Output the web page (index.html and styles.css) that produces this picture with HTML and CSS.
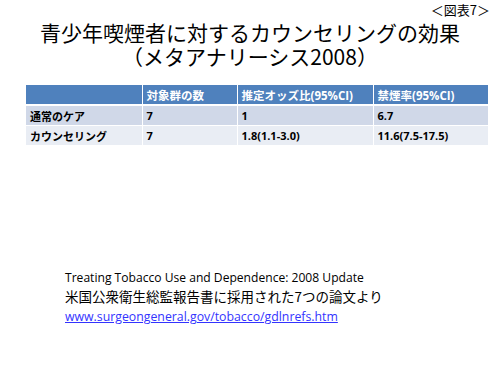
FILE: index.html
```html
<!DOCTYPE html>
<html lang="ja">
<head>
<meta charset="utf-8">
<link rel="stylesheet" href="styles.css">
</head>
<body>
<div class="slide">
  <div class="label">＜図表7＞</div>
  <h1 class="title"><span class="t1">青少年喫煙者に対するカウンセリングの効果</span><span class="t2">（メタアナリーシス2008）</span></h1>
  <table class="data">
    <colgroup>
      <col class="c1"><col class="c2"><col class="c3"><col class="c4">
    </colgroup>
    <thead>
      <tr><th></th><th>対象群の数</th><th>推定オッズ比(95%CI)</th><th>禁煙率(95%CI)</th></tr>
    </thead>
    <tbody>
      <tr class="odd"><td>通常のケア</td><td>7</td><td>1</td><td>6.7</td></tr>
      <tr class="even"><td>カウンセリング</td><td>7</td><td>1.8(1.1-3.0)</td><td>11.6(7.5-17.5)</td></tr>
    </tbody>
  </table>
  <div class="source">
    <div class="src-en">Treating Tobacco Use and Dependence: 2008 Update</div>
    <div class="src-ja">米国公衆衛生総監報告書に採用された7つの論文より</div>
    <a class="src-link" href="#">www.surgeongeneral.gov/tobacco/gdlnrefs.htm</a>
  </div>
</div>
</body>
</html>
```

FILE: styles.css
```css
html, body {
  margin: 0;
  padding: 0;
  background: #ffffff;
}
.slide {
  width: 500px;
  height: 369px;
  position: relative;
  font-family: "Open Sans", "Noto Sans CJK JP", sans-serif;
  color: #000;
  overflow: hidden;
}
.label {
  position: absolute;
  top: 2px;
  right: 10px;
  font-family: "Noto Sans CJK JP", sans-serif;
  font-size: 13px;
  line-height: 16px;
}
.title {
  margin: 0;
  padding-top: 20px;
  text-align: center;
  font-family: "Noto Sans CJK JP", sans-serif;
  font-weight: normal;
  font-size: 21px;
  line-height: 24px;
}
.t1, .t2 { display: block; }
.data {
  margin: 17px 0 0 26px;
  width: 462px;
  border-collapse: collapse;
  table-layout: fixed;
  font-family: "Open Sans", "Noto Sans CJK JP", sans-serif;
  font-size: 11px;
  font-weight: bold;
}
.c1 { width: 116px; }
.c2 { width: 95px; }
.c3 { width: 136px; }
.c4 { width: 115px; }
.data th, .data td {
  text-align: left;
  padding: 0 4px;
  border-left: 1px solid #ffffff;
  white-space: nowrap;
}
.data th:first-child, .data td:first-child { border-left: none; }
.data th {
  background: #4f81bd;
  color: #ffffff;
  font-weight: bold;
  font-size: 11.5px;
  height: 19px;
  border-bottom: 2px solid #ffffff;
}
.data td {
  height: 19px;
}
.data tr.odd td { background: #d0d8e8; border-bottom: 1px solid #ffffff; }
.data tr.even td { background: #e9edf4; }
.source {
  margin: 123px 0 0 65px;
  line-height: 19px;
}
.src-en { font-family: "Open Sans", sans-serif; font-size: 12.1px; }
.src-ja { font-family: "Noto Sans CJK JP", sans-serif; font-size: 13.5px; }
.src-link {
  font-family: "Open Sans", sans-serif;
  font-size: 12.3px;
  color: #3333ff;
  text-decoration: underline;
}
```
